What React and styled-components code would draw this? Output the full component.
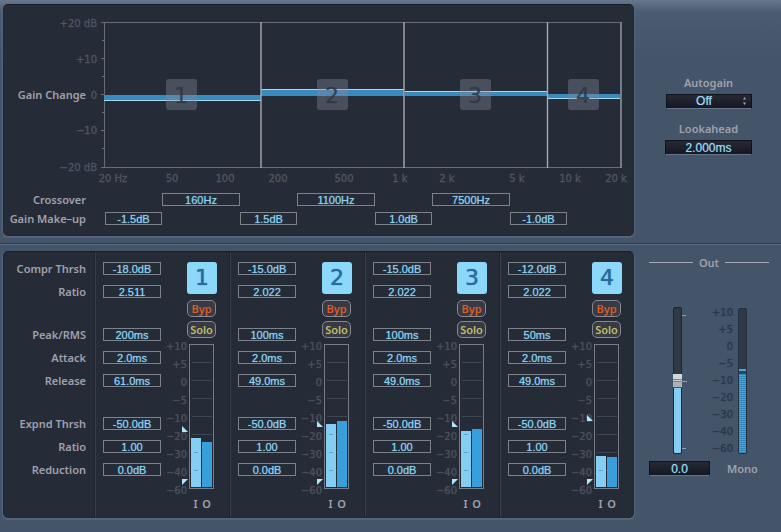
import React, { useState } from "react";
import styled, { createGlobalStyle } from "styled-components";

const LABEL_FONT = '"Noto Sans", "Open Sans", sans-serif';
const SCALE_FONT = '"DejaVu Sans", sans-serif';
const VALUE_FONT = '"Liberation Sans", Arial, sans-serif';

const GlobalStyle = createGlobalStyle`
  * { box-sizing: border-box; }
  body {
    margin: 0;
    min-height: 100vh;
    background: #445469 linear-gradient(#66788e, #4b5b70 12px, #445469 60px) no-repeat;
    font-family: ${LABEL_FONT};
    color: #a0a1ac;
  }
`;

const Section = styled.section`
  display: grid;
  grid-template-columns: minmax(0, 1fr) 147px;
  padding: ${(p) => (p.$lower ? "7px 0 14px 3px" : "4px 0 7px 3px")};
  border-top: ${(p) => (p.$lower ? "1px solid #303d50" : "0")};
  box-shadow: ${(p) => (p.$lower ? "inset 0 1px 0 #5b6c82" : "none")};
`;

const Panel = styled.div`
  background: #252c38;
  border: 1px solid #1f2733;
  border-top-color: #161d28;
  border-radius: 5px;
  box-shadow: 0 1px 1px 1px #55667c;
`;

const Chart = styled.svg`
  display: block;
  width: 100%;
`;

const LabelText = styled.label`
  grid-column: 1;
  font: 600 11px/13px ${LABEL_FONT};
  color: #a0a1ac;
  text-align: right;
  white-space: nowrap;
`;

const CrossoverGrid = styled.div`
  display: grid;
  grid-template-columns: 82px 19px 57px repeat(3, 78px 57px);
  row-gap: 6px;
  padding-bottom: 10px;
`;

const Field = styled.input`
  grid-column: ${(p) => p.$column || "auto"};
  display: block;
  width: 100%;
  height: 13px;
  margin: 0;
  padding: 0;
  border: 1px solid #7d818a;
  border-radius: 0;
  background: transparent;
  color: #8fd3f3;
  font: 11px/11px ${VALUE_FONT};
  text-align: center;
  text-shadow: 0 0 1px #5f9fc0;
`;

const StripPanel = styled(Panel)`
  display: grid;
  grid-template-columns: 90px repeat(3, minmax(0, 135fr)) minmax(0, 134fr);
`;

const ParameterColumn = styled.div`
  display: flex;
  flex-direction: column;
  gap: 30px;
  width: ${(p) => (p.$labels ? "82px" : "58px")};
  padding-top: 10px;
`;

const ParameterGroup = styled.div`
  display: flex;
  flex-direction: column;
  gap: 10px;
`;

const Strip = styled.div`
  display: flex;
  gap: 3px;
  padding: 0 0 7px 8px;
  border-left: 1px solid #1b222d;
  box-shadow: inset 1px 0 0 #39404d;
`;

const StripSide = styled.div`
  padding-top: 10px;
`;

const Controls = styled.div`
  display: flex;
  flex-direction: column;
  align-items: flex-start;
  gap: 4px;
  margin-left: 23px;
`;

const BandBadge = styled.div`
  width: 30px;
  height: 32px;
  margin-bottom: 2px;
  border-radius: 3px;
  background: #8cd8fa;
  color: #2a68a0;
  font: 22px/32px ${SCALE_FONT};
  text-align: center;
  text-shadow: 0 0 1px #2a68a0;
`;

const SwitchButton = styled.button`
  width: 29px;
  height: 17px;
  padding: 0;
  border: 1px solid #858890;
  border-radius: 5px;
  background: #383b44;
  color: ${(p) => p.$tone};
  font: 600 11px/13px ${LABEL_FONT};
`;

const MeterRow = styled.div`
  display: flex;
`;

const Scale = styled.ol`
  list-style: none;
  width: ${(p) => p.$width};
  margin: ${(p) => p.$lift || 0} 0 0;
  padding: 0;
  text-align: right;
  white-space: nowrap;
  font: 10px/${(p) => p.$step} ${SCALE_FONT};
  color: ${(p) => p.$color};
  text-shadow: 0 0 1px ${(p) => p.$color};
`;

const MeterStack = styled.div`
  display: flex;
  flex-direction: column;
  padding-top: 6px;
  margin-left: -5px;
`;

const MeterDrawing = styled.svg`
  display: block;
`;

const ChannelNames = styled.div`
  display: grid;
  grid-template-columns: 11px 11px;
  margin: 7px 0 0 8px;
  text-align: center;
  font: 600 11px/13px ${LABEL_FONT};
`;

const SideControls = styled.div`
  display: flex;
  flex-direction: column;
  align-items: center;
  padding: 72px 0 0 2px;
  gap: 13px;
`;

const ControlGroup = styled.div`
  display: flex;
  flex-direction: column;
  align-items: center;
  gap: 5px;
`;

const SelectWrap = styled.div`
  position: relative;
`;

const readout = `
  display: block;
  height: 15px;
  margin: 0;
  padding: 0;
  appearance: none;
  border: 1px solid #10121b;
  border-bottom-color: #66758a;
  border-radius: 1px;
  background: linear-gradient(#272936, #151722);
  color: #9bd8f2;
  font: 12px/13px ${VALUE_FONT};
  text-align: center;
  text-shadow: 0 0 1px #5f9fc0;
`;

const ReadoutSelect = styled.select`
  ${readout}
  width: 86px;
  padding-right: 9px;
  text-align-last: center;
`;

const ReadoutInput = styled.input`
  ${readout}
  width: ${(p) => p.$width};
`;

const Arrows = styled.svg`
  position: absolute;
  right: 5px;
  top: 3px;
  pointer-events: none;
`;

const OutSection = styled.div`
  padding: 4px 12px 0 15px;
`;

const OutTitle = styled.h2`
  display: flex;
  align-items: center;
  gap: 6px;
  margin: 0 0 37px;
  font: 600 11px/15px ${LABEL_FONT};
  &::before,
  &::after {
    content: "";
    flex: 1;
    height: 1px;
    background: #a3a9b8;
  }
`;

const OutMeters = styled.div`
  display: flex;
  padding-left: 24px;
`;

const Fader = styled.input`
  appearance: none;
  writing-mode: vertical-lr;
  direction: rtl;
  width: 9px;
  height: 147px;
  margin: 0;
  border: 1px solid #1b2736;
  border-radius: 2px;
  background: linear-gradient(#303a46 50%, #84cdf3 50%);
  &::-webkit-slider-thumb {
    appearance: none;
    width: 9px;
    height: 14px;
    border: 0;
    background: linear-gradient(#d6d6da 5px, #85868e 5px 6px, #c5c5cb 6px 7px, #85868e 7px 8px, #aeb0b8 8px 13px, #315678 13px);
  }
`;

const OutFooter = styled.div`
  display: flex;
  align-items: center;
  gap: 17px;
  margin-top: 4px;
`;

const crossovers = [
  { value: "160Hz", column: 4 },
  { value: "1100Hz", column: 6 },
  { value: "7500Hz", column: 8 },
];

const makeups = [
  { value: "-1.5dB", column: 3 },
  { value: "1.5dB", column: 5 },
  { value: "1.0dB", column: 7 },
  { value: "-1.0dB", column: 9 },
];

const parameterGroups = [
  ["Compr Thrsh", "Ratio"],
  ["Peak/RMS", "Attack", "Release"],
  ["Expnd Thrsh", "Ratio", "Reduction"],
];

const bands = [
  { values: [["-18.0dB", "2.511"], ["200ms", "2.0ms", "61.0ms"], ["-50.0dB", "1.00", "0.0dB"]], input: 94, output: 98, marker: 82 },
  { values: [["-15.0dB", "2.022"], ["100ms", "2.0ms", "49.0ms"], ["-50.0dB", "1.00", "0.0dB"]], input: 80, output: 77, marker: 77 },
  { values: [["-15.0dB", "2.022"], ["100ms", "2.0ms", "49.0ms"], ["-50.0dB", "1.00", "0.0dB"]], input: 87, output: 85, marker: 77 },
  { values: [["-12.0dB", "2.022"], ["50ms", "2.0ms", "49.0ms"], ["-50.0dB", "1.00", "0.0dB"]], input: 112, output: 113, marker: 71 },
];

const levels = ["+10", "+5", "0", "−5", "−10", "−20", "−30", "−40", "−60"];

const frequencies = [
  ["20 Hz", 109], ["50", 168], ["100", 221], ["200", 274], ["500", 340],
  ["1 k", 396], ["2 k", 443], ["5 k", 513], ["10 k", 566], ["20 k", 612],
];

const gains = [["+20 dB", 18], ["+10", 54], ["0", 90], ["−10", 125], ["−20 dB", 162]];

const regions = [
  { x: 100, width: 157, top: 90, height: 6, edge: 95, badge: 163 },
  { x: 257, width: 143, top: 84, height: 7, edge: 84, badge: 314 },
  { x: 401, width: 142, top: 86, height: 5, edge: 86, badge: 457 },
  { x: 544, width: 74, top: 89, height: 5, edge: 93, badge: 565 },
];

function GainChart() {
  return (
    <Chart viewBox="0 0 629 188" role="img" aria-label="Gain change by frequency band">
      <g stroke="#666c78" fill="none">
        <path d="M100.5 17V163M97 17.5H617M97 162.5H617" />
        <path d="M98 35.5h2M97 53.5h3M98 71.5h2M97 89.5h3M98 107.5h2M97 125.5h3M98 143.5h2" />
      </g>
      {regions.map((r) => (
        <g key={r.x}>
          <rect x={r.x} y={r.top} width={r.width} height={r.height} fill="#398abd" />
          <rect x={r.x} y={r.edge} width={r.width} height="1" fill="#a5dbed" />
        </g>
      ))}
      <path d="M257 17V163M400 17V163M543.5 17V163" stroke="#a6a8b1" strokeWidth="1.4" />
      <path d="M617 17V163" stroke="#767b86" strokeWidth="2" />
      {regions.map((r, i) => (
        <g key={r.badge}>
          <rect x={r.badge - 1} y="74" width="31" height="31" rx="3" fill="#85899a" fillOpacity="0.38" />
          <text x={r.badge + 14} y="98" textAnchor="middle" fontFamily={SCALE_FONT} fontSize="22"
            fill="#303744" fillOpacity="0.85" stroke="#303744" strokeOpacity="0.5" strokeWidth="0.6">
            {i + 1}
          </text>
        </g>
      ))}
      <g fill="#525560" stroke="#525560" strokeWidth="0.3" fontFamily={SCALE_FONT} fontSize="10">
        {frequencies.map(([text, x]) => (
          <text key={text} x={x} y="177" textAnchor="middle">{text}</text>
        ))}
        {gains.map(([text, y]) => (
          <text key={text} x="93" y={y + 4} textAnchor="end">{text}</text>
        ))}
      </g>
      <text x="82" y="94" textAnchor="end" fontFamily={LABEL_FONT} fontWeight="600" fontSize="11" fill="#a0a1ac">
        Gain Change
      </text>
    </Chart>
  );
}

function BandMeter({ band }) {
  return (
    <MeterDrawing width="34" height="146" viewBox="0 0 34 146" role="img" aria-label="Input and output level">
      <rect x="7.5" y="0.5" width="24" height="144" fill="none" stroke="#777b85" />
      <path d="M10 18.5h20M10 36.5h20M10 54.5h20M10 72.5h20M10 90.5h20M10 108.5h20M10 126.5h20" stroke="#414752" />
      <rect x="9" y={band.input} width="10" height={143 - band.input} fill="#84cef3" />
      <rect x="20" y={band.output} width="10" height={143 - band.output} fill="#369fdc" />
      {[90, 108, 126].filter((y) => y > band.input).map((y) => (
        <path key={y} d={`M12 ${y}.5h4M23 ${y}.5h4`} stroke="#4d92be" opacity="0.7" />
      ))}
      <path d={`M0 ${band.marker}v6h6z`} fill="#b4e7f5" />
      <path d="M0 135h6l-6 6z" fill="#b4e7f5" />
    </MeterDrawing>
  );
}

function BandStrip({ band, number }) {
  return (
    <Strip>
      <ParameterColumn>
        {band.values.map((values, g) => (
          <ParameterGroup key={g}>
            {values.map((value, i) => (
              <Field key={i} id={`band${number}-${g}-${i}`} defaultValue={value}
                aria-label={`${parameterGroups[g][i]}, band ${number}`} />
            ))}
          </ParameterGroup>
        ))}
      </ParameterColumn>
      <StripSide>
        <Controls>
          <BandBadge>{number}</BandBadge>
          <SwitchButton type="button" $tone="#d95b28">Byp</SwitchButton>
          <SwitchButton type="button" $tone="#c0bd6a">Solo</SwitchButton>
        </Controls>
        <MeterRow>
          <Scale $width="23px" $step="18px" $color="#4b4f5a">
            {levels.map((level) => <li key={level}>{level}</li>)}
          </Scale>
          <MeterStack>
            <BandMeter band={band} />
            <ChannelNames><span>I</span><span>O</span></ChannelNames>
          </MeterStack>
        </MeterRow>
      </StripSide>
    </Strip>
  );
}

export default function App() {
  const [gain, setGain] = useState(50);
  return (
    <main>
      <GlobalStyle />
      <Section>
        <Panel>
          <GainChart />
          <CrossoverGrid>
            <LabelText htmlFor="crossover-0">Crossover</LabelText>
            {crossovers.map((c, i) => (
              <Field key={c.value} id={`crossover-${i}`} $column={c.column} defaultValue={c.value}
                aria-label={`Crossover ${i + 1}`} />
            ))}
            <LabelText htmlFor="makeup-0">Gain Make–up</LabelText>
            {makeups.map((m, i) => (
              <Field key={m.value} id={`makeup-${i}`} $column={m.column} defaultValue={m.value}
                aria-label={`Gain Make-up ${i + 1}`} />
            ))}
          </CrossoverGrid>
        </Panel>
        <SideControls>
          <ControlGroup>
            <LabelText htmlFor="autogain">Autogain</LabelText>
            <SelectWrap>
              <ReadoutSelect id="autogain" defaultValue="Off">
                <option>Off</option>
                <option>On</option>
              </ReadoutSelect>
              <Arrows width="5" height="8" viewBox="0 0 5 8" aria-hidden="true">
                <path d="M2.5 0L4 2.5h-3zM2.5 8L4 5.5h-3z" fill="#a5a8b4" />
              </Arrows>
            </SelectWrap>
          </ControlGroup>
          <ControlGroup>
            <LabelText htmlFor="lookahead">Lookahead</LabelText>
            <ReadoutInput id="lookahead" $width="87px" defaultValue="2.000ms" />
          </ControlGroup>
        </SideControls>
      </Section>
      <Section $lower>
        <StripPanel>
          <ParameterColumn $labels>
            {parameterGroups.map((names, g) => (
              <ParameterGroup key={g}>
                {names.map((name, i) => (
                  <LabelText key={name} htmlFor={`band1-${g}-${i}`}>{name}</LabelText>
                ))}
              </ParameterGroup>
            ))}
          </ParameterColumn>
          {bands.map((band, i) => <BandStrip key={i} band={band} number={i + 1} />)}
        </StripPanel>
        <OutSection>
          <OutTitle>Out</OutTitle>
          <OutMeters>
            <Fader type="range" min="0" max="100" value={gain} aria-label="Output gain"
              onChange={(e) => setGain(Number(e.target.value))} />
            <MeterDrawing width="5" height="147" viewBox="0 0 5 147" aria-hidden="true">
              <path d="M0 8.5h4M0 74.5h5M0 141.5h4" stroke="#98a0ae" />
            </MeterDrawing>
            <Scale $width="46px" $step="17px" $lift="-3px" $color="#2c394c">
              {levels.map((level) => <li key={level}>{level}</li>)}
            </Scale>
            <MeterDrawing width="16" height="148" viewBox="0 0 16 148" role="img" aria-label="Output level">
              <defs>
                <pattern id="segments" width="7" height="2" patternUnits="userSpaceOnUse">
                  <rect width="7" height="1" fill="#4aa5d6" />
                  <rect y="1" width="7" height="1" fill="#2f86b8" />
                </pattern>
              </defs>
              <rect x="5.5" y="1.5" width="8" height="145" rx="1" fill="#303a46" stroke="#223043" />
              <rect x="6" y="62" width="7" height="2" fill="#4aa5d6" />
              <rect x="6" y="64" width="7" height="3" fill="#1f4a6c" />
              <rect x="6" y="67" width="7" height="79" fill="url(#segments)" />
            </MeterDrawing>
          </OutMeters>
          <OutFooter>
            <ReadoutInput $width="61px" defaultValue="0.0" aria-label="Output gain value" />
            <LabelText as="span">Mono</LabelText>
          </OutFooter>
        </OutSection>
      </Section>
    </main>
  );
}
